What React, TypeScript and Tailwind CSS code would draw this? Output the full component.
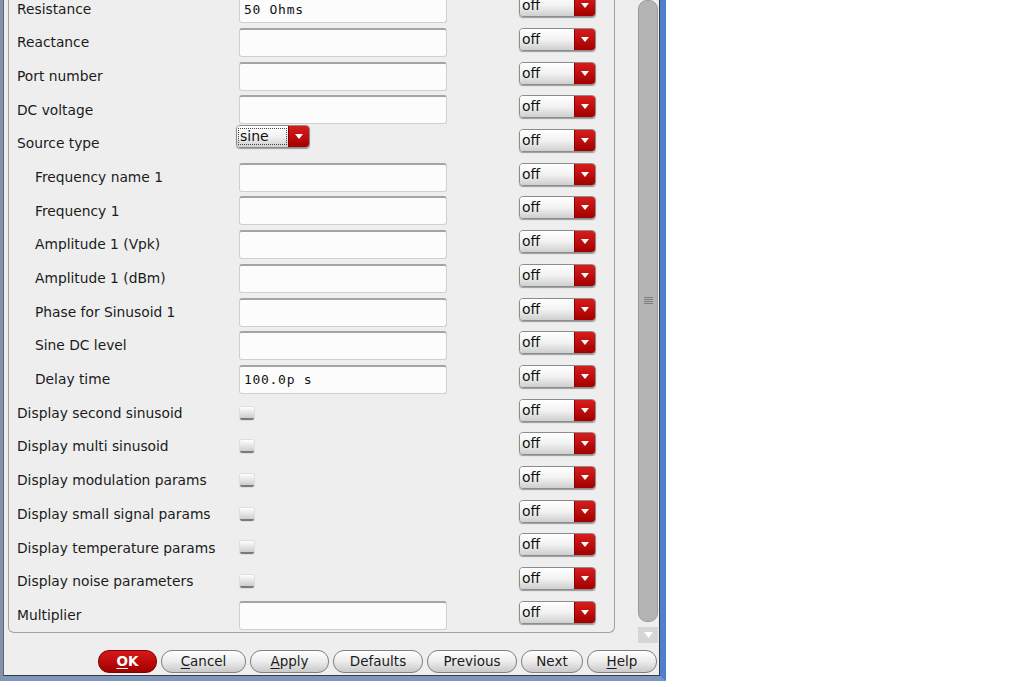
import React from "react";

type Row = {
	label: string;
	indent?: boolean;
	kind: "text" | "select" | "check";
	value?: string;
};

const rows: Row[] = [
	{ label: "Resistance", kind: "text", value: "50 Ohms" },
	{ label: "Reactance", kind: "text" },
	{ label: "Port number", kind: "text" },
	{ label: "DC voltage", kind: "text" },
	{ label: "Source type", kind: "select", value: "sine" },
	{ label: "Frequency name 1", indent: true, kind: "text" },
	{ label: "Frequency 1", indent: true, kind: "text" },
	{ label: "Amplitude 1 (Vpk)", indent: true, kind: "text" },
	{ label: "Amplitude 1 (dBm)", indent: true, kind: "text" },
	{ label: "Phase for Sinusoid 1", indent: true, kind: "text" },
	{ label: "Sine DC level", indent: true, kind: "text" },
	{ label: "Delay time", indent: true, kind: "text", value: "100.0p s" },
	{ label: "Display second sinusoid", kind: "check" },
	{ label: "Display multi sinusoid", kind: "check" },
	{ label: "Display modulation params", kind: "check" },
	{ label: "Display small signal params", kind: "check" },
	{ label: "Display temperature params", kind: "check" },
	{ label: "Display noise parameters", kind: "check" },
	{ label: "Multiplier", kind: "text" },
];

const Arrow = () => (
	<svg width="8" height="5" viewBox="0 0 8 5">
		<path d="M0 0 H8 L4 5 Z" fill="#ffffff" />
	</svg>
);

const Combo = ({
	text,
	width,
	focus,
}: {
	text: string;
	width: string;
	focus?: boolean;
}) => (
	<div
		className={`flex h-[23px] ${width} rounded-[4px] overflow-hidden border border-[#8c8c8c] shadow-[0_1px_1px_rgba(0,0,0,0.35)]`}
	>
		<div className="flex-1 flex items-center bg-linear-to-b from-[#ffffff] via-[#f2f2f2] to-[#cfcfcf] pl-[1px] text-[14px] text-[#111]">
			{focus ? (
				<span className="border border-dotted border-[#444] pl-[1px] pr-[17px] leading-[15px]">
					{text}
				</span>
			) : (
				<span className="pl-[1px]">{text}</span>
			)}
		</div>
		<div className="w-[21px] flex items-center justify-center bg-linear-to-b from-[#d81c1c] to-[#a30000] border-l border-[#8a0000]">
			<Arrow />
		</div>
	</div>
);

const TextBox = ({ value }: { value?: string }) => (
	<div className="w-[208px] h-[29px] rounded-[3px] bg-[#fcfcfc] border border-[#d0d0d0] border-t-2 border-t-[#a4a4a4] flex items-center pl-[4px] font-['DejaVu_Sans_Mono',monospace] text-[13px] tracking-[0.7px] text-[#111]">
		{value}
	</div>
);

const Check = () => (
	<div className="ml-[1px] w-[14px] h-[13px] rounded-[2px] bg-linear-to-b from-[#ffffff] to-[#cdcdcd] border-b-2 border-[#7a7a7a] shadow-[0_0_0_1px_#dedede]" />
);

const FormRow = ({ row }: { row: Row }) => (
	<div className="flex items-center h-[33.7px] pl-[8px]">
		<div
			className={`w-[222px] text-[13.8px] text-[#1b1b1b] ${row.indent ? "pl-[18px]" : ""}`}
		>
			{row.label}
		</div>
		<div className="w-[280px] flex items-center">
			{row.kind === "text" && <TextBox value={row.value} />}
			{row.kind === "select" && (
				<div className="-ml-[3px] mb-[14px]">
					<Combo text={row.value ?? ""} width="w-[74px]" focus />
				</div>
			)}
			{row.kind === "check" && <Check />}
		</div>
		<div className="mb-[6px]">
			<Combo text="off" width="w-[77px]" />
		</div>
	</div>
);

const buttons = [
	{ label: "OK", u: 0, w: "w-[59px]", primary: true },
	{ label: "Cancel", u: 0, w: "w-[85px]" },
	{ label: "Apply", u: 0, w: "w-[79px]" },
	{ label: "Defaults", u: -1, w: "w-[90px]" },
	{ label: "Previous", u: -1, w: "w-[90px]" },
	{ label: "Next", u: -1, w: "w-[62px]" },
	{ label: "Help", u: 0, w: "w-[70px]" },
];

export default function App() {
	return (
		<div className="min-h-screen bg-white font-['DejaVu_Sans',sans-serif]">
			<div className="w-[666px] h-[681px] flex flex-col bg-[#eeeeee] border-l-[3px] border-l-[#8391a9] border-r-[6px] border-r-[#4f80cf] border-b-[5px] border-b-[#7f97bd]">
				<div className="flex flex-col flex-1 border-r border-b border-[#3a3a3a] border-l border-l-[#5a6475]">
					<div className="flex h-[643px]">
						<div className="pl-[4px] overflow-hidden">
							<div className="-mt-[8px] w-[607px] border-x border-b border-[#a2a2a2] rounded-b-[6px]">
								{rows.map((row) => (
									<FormRow key={row.label} row={row} />
								))}
							</div>
						</div>
						<div className="ml-auto w-[20px] mr-[1px] flex flex-col">
							<div className="flex-1 mb-[5px] rounded-t-[9px] rounded-b-[9px] bg-[#b4b4b4] border border-[#9a9a9a] flex justify-center pt-[296px]">
								<div className="flex flex-col gap-[1px]">
									<div className="w-[9px] h-[1px] bg-[#7c7c7c]" />
									<div className="w-[9px] h-[1px] bg-[#7c7c7c]" />
									<div className="w-[9px] h-[1px] bg-[#7c7c7c]" />
									<div className="w-[9px] h-[1px] bg-[#7c7c7c]" />
								</div>
							</div>
							<div className="h-[16px] bg-[#d6d6d6] flex items-center justify-center">
								<svg width="9" height="6" viewBox="0 0 9 6">
									<path d="M0 0 H9 L4.5 6 Z" fill="#ffffff" />
								</svg>
							</div>
						</div>
					</div>
					<div className="flex justify-end gap-[4px] pr-[2px] pt-[7px]">
						{buttons.map((b) => (
							<div
								key={b.label}
								className={`${b.w} h-[23px] rounded-[11px] border flex items-center justify-center text-[13.5px] ${
									b.primary
										? "bg-linear-to-b from-[#d81818] to-[#a10000] border-[#7e0000] text-white font-bold"
										: "bg-linear-to-b from-[#ffffff] via-[#ececec] to-[#c9c9c9] border-[#808080] text-[#1b1b1b]"
								}`}
							>
								{b.u === 0 ? (
									<span>
										<span className="underline underline-offset-2">
											{b.label[0]}
										</span>
										{b.label.slice(1)}
									</span>
								) : (
									b.label
								)}
							</div>
						))}
					</div>
				</div>
			</div>
		</div>
	);
}
